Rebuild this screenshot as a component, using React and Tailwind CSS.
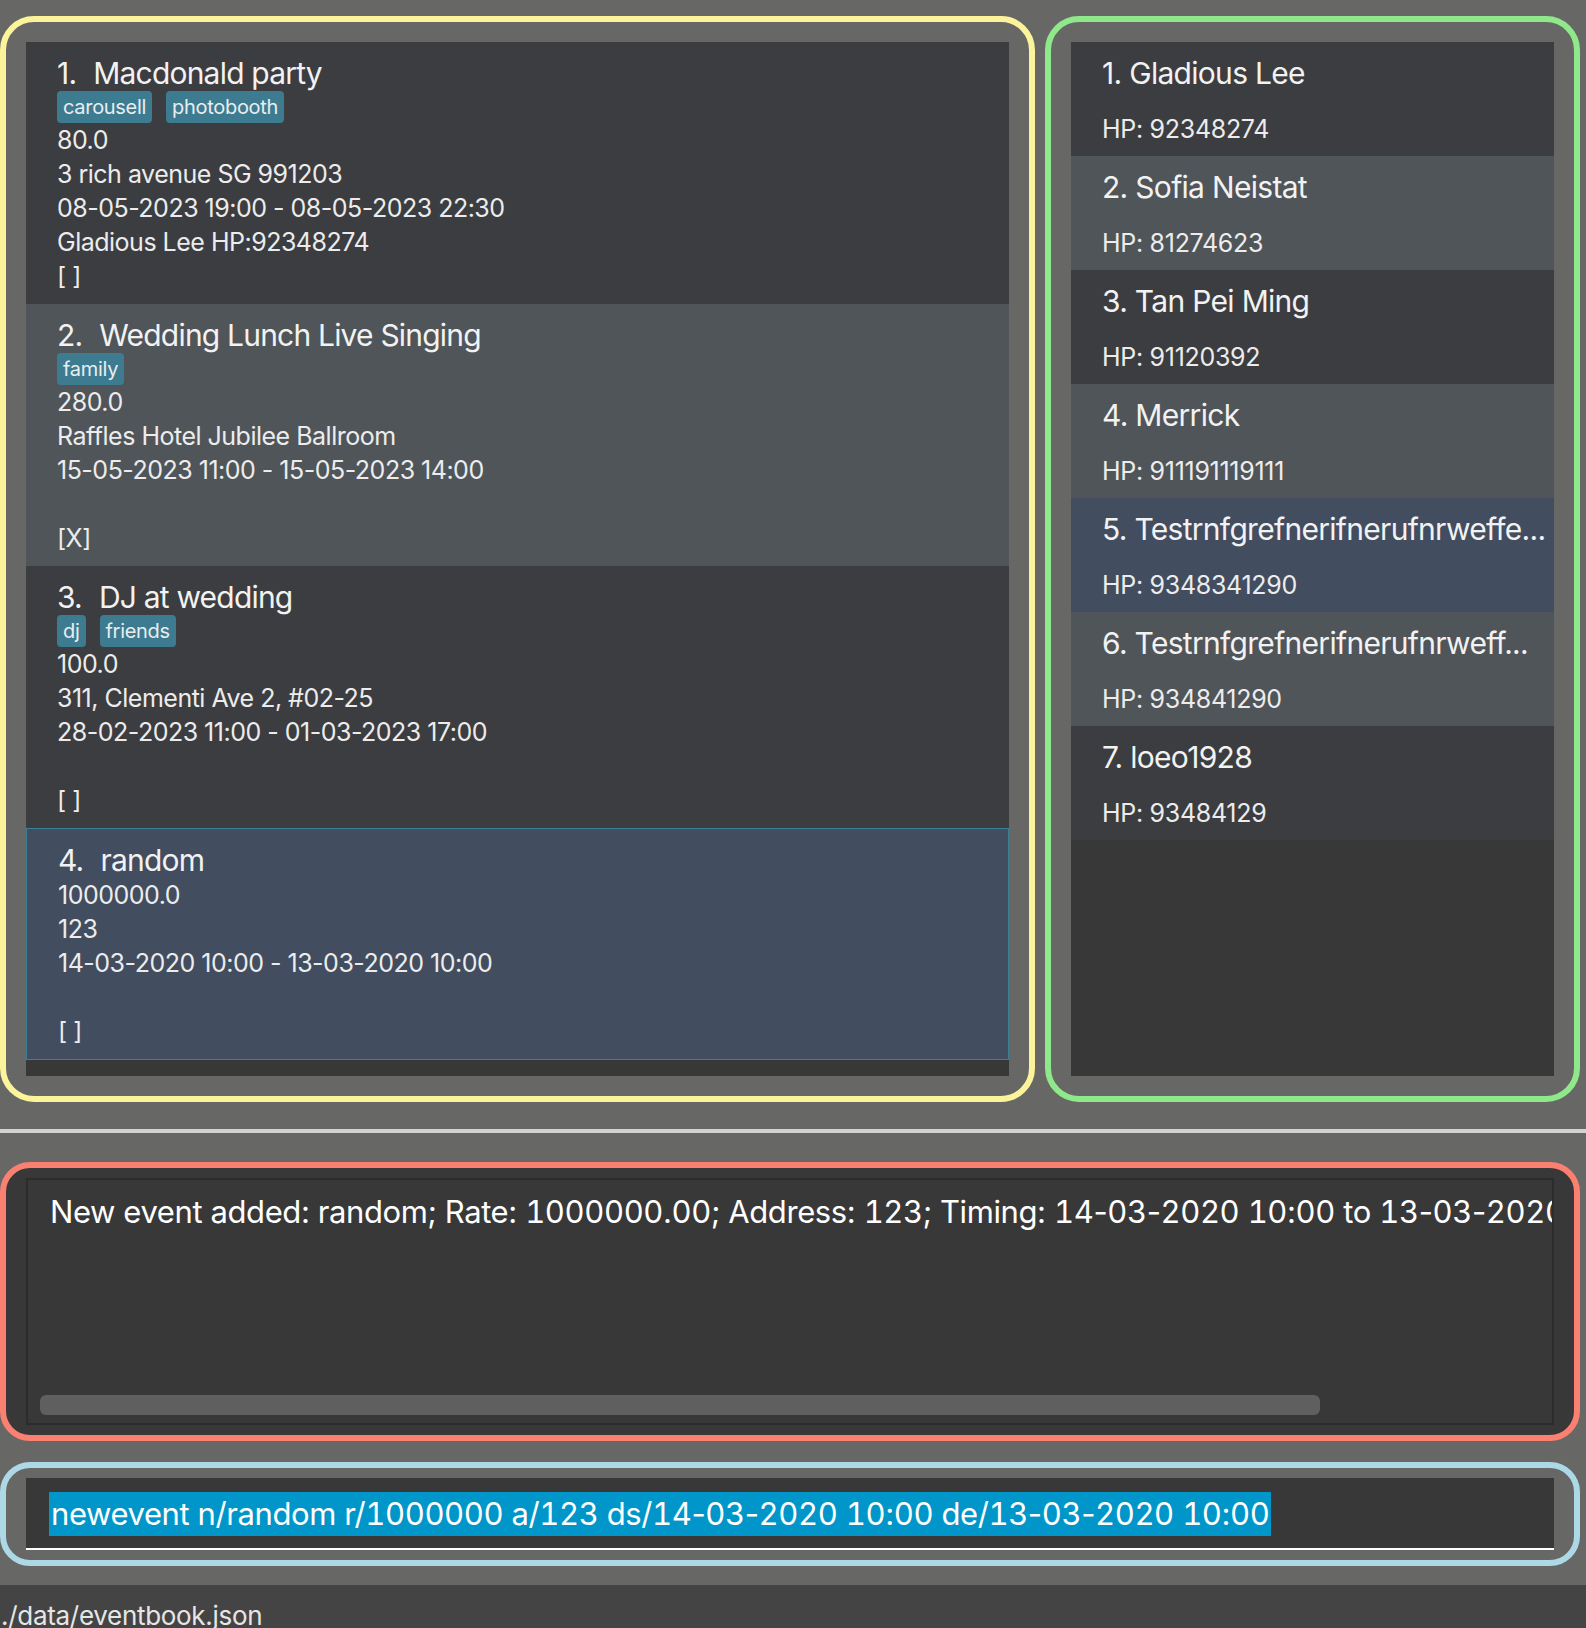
import React from 'react';

const events = [
  {
    title: 'Macdonald party',
    tags: ['carousell', 'photobooth'],
    lines: ['80.0', '3 rich avenue SG 991203', '08-05-2023 19:00 - 08-05-2023 22:30', 'Gladious Lee HP:92348274', '[ ]'],
    bg: 'bg-[#3c3d40]',
  },
  {
    title: 'Wedding Lunch Live Singing',
    tags: ['family'],
    lines: ['280.0', 'Raffles Hotel Jubilee Ballroom', '15-05-2023 11:00 - 15-05-2023 14:00', '', '[X]'],
    bg: 'bg-[#505559]',
  },
  {
    title: 'DJ at wedding',
    tags: ['dj', 'friends'],
    lines: ['100.0', '311, Clementi Ave 2, #02-25', '28-02-2023 11:00 - 01-03-2023 17:00', '', '[ ]'],
    bg: 'bg-[#3c3d40]',
  },
  {
    title: 'random',
    tags: [],
    lines: ['1000000.0', '123', '14-03-2020 10:00 - 13-03-2020 10:00', '', '[ ]'],
    bg: 'bg-[#424d5f] border border-[#3c7f95]',
  },
];

const persons = [
  { name: 'Gladious Lee', hp: '92348274', bg: 'bg-[#3c3d40]' },
  { name: 'Sofia Neistat', hp: '81274623', bg: 'bg-[#505559]' },
  { name: 'Tan Pei Ming', hp: '91120392', bg: 'bg-[#3c3d40]' },
  { name: 'Merrick', hp: '911191119111', bg: 'bg-[#505559]' },
  { name: 'Testrnfgrefnerifnerufnrweffe...', hp: '9348341290', bg: 'bg-[#424d5f]' },
  { name: 'Testrnfgrefnerifnerufnrweff...', hp: '934841290', bg: 'bg-[#505559]' },
  { name: 'loeo1928', hp: '93484129', bg: 'bg-[#3c3d40]' },
];

const resultText =
  'New event added: random; Rate: 1000000.00; Address: 123; Timing: 14-03-2020 10:00 to 13-03-2020 10:00';
const commandText = 'newevent n/random r/1000000 a/123 ds/14-03-2020 10:00 de/13-03-2020 10:00';

// wider digits, but keep hyphens narrow
const WideDigits = ({ text }) =>
  text.split(/(\d+)/).map((part, i) =>
    /^\d+$/.test(part) ? (
      <span key={i} className="tabular-nums">
        {part}
      </span>
    ) : (
      <React.Fragment key={i}>{part}</React.Fragment>
    )
  );

const EventCard = ({ event, index }) => (
  <div className={`${event.bg} pt-[13px] pb-[11px] pl-[31px] pr-[20px]`}>
    <div className="flex text-[30px] leading-[36px] tracking-[-0.8px] text-[#f2f2f2]">
      <span>{index + 1}.</span>
      <span className="ml-[17px]">{event.title}</span>
    </div>
    {event.tags.length > 0 && (
      <div className="flex gap-[14px]">
        {event.tags.map((tag) => (
          <span
            key={tag}
            className="h-[32px] px-[6px] rounded-[4px] bg-[#3d7b90] text-[20px] leading-[32px] tracking-[-0.3px] text-[#e8eef0]"
          >
            {tag}
          </span>
        ))}
      </div>
    )}
    {event.lines.map((line, i) => (
      <div key={i} className="h-[34px] text-[25px] leading-[34px] tracking-[-0.5px] text-[#ececec] whitespace-nowrap">
        {line}
      </div>
    ))}
  </div>
);

const PersonCard = ({ person, index }) => (
  <div className={`${person.bg} h-[114px] pt-[13px] pl-[31px] pr-[2px]`}>
    <div className="text-[30px] leading-[36px] tracking-[-0.7px] text-[#f2f2f2] whitespace-nowrap overflow-hidden">
      {index + 1}. {person.name}
    </div>
    <div className="mt-[21px] text-[25px] leading-[34px] tracking-[-0.3px] text-[#ececec]">HP: {person.hp}</div>
  </div>
);

export default function App() {
  return (
    <div
      className="w-[1586px] h-[1628px] bg-[#676765] flex flex-col overflow-hidden"
      style={{ fontFamily: 'Inter, "Noto Sans", sans-serif' }}
    >
      {/* Lists */}
      <div className="flex gap-[10px] pt-[16px]">
        <div className="w-[1035px] h-[1086px] border-[6px] border-[#fcf49b] rounded-[34px] p-[20px]">
          <div className="h-full bg-[#383838] overflow-hidden">
            {events.map((event, i) => (
              <EventCard key={i} event={event} index={i} />
            ))}
          </div>
        </div>
        <div className="w-[535px] h-[1086px] border-[6px] border-[#8fe98b] rounded-[34px] p-[20px]">
          <div className="h-full bg-[#383838] overflow-hidden">
            {persons.map((person, i) => (
              <PersonCard key={i} person={person} index={i} />
            ))}
          </div>
        </div>
      </div>

      <div className="mt-[27px] h-[4px] bg-[#d3d3d1]" />

      {/* Result display */}
      <div className="mt-[29px] w-[1580px] h-[279px] border-[6px] border-[#fa8072] rounded-[30px] bg-[#383838] pt-[10px] pb-[10px] pl-[20px] pr-[20px]">
        <div className="relative h-full border-2 border-[#2c2c2c] overflow-hidden">
          <div className="pt-[13px] pl-[22px] text-[31px] leading-[38px] tracking-[-0.4px] text-white whitespace-nowrap">
            <WideDigits text={resultText} />
          </div>
          <div className="absolute left-[12px] bottom-[8px] w-[1280px] h-[20px] rounded-[6px] bg-[#5f5f5f]" />
        </div>
      </div>

      {/* Command box */}
      <div className="mt-[21px] w-[1580px] h-[104px] border-[6px] border-[#add8e6] rounded-[30px] pt-[10px] pb-[10px] pl-[20px] pr-[20px]">
        <div className="h-[72px] bg-[#383838] border-b-2 border-white pt-[14px] pl-[23px]">
          <span className="inline-block h-[44px] px-[2px] bg-[#0096c9] text-[31px] leading-[44px] tracking-[-0.4px] text-white whitespace-nowrap">
            <WideDigits text={commandText} />
          </span>
        </div>
      </div>

      {/* Status bar */}
      <div className="mt-[19px] h-[43px] bg-[#444444] overflow-hidden pt-[15px] pl-[1px]">
        <div className="text-[26px] leading-[31px] tracking-[-0.3px] text-[#e6e6e6]">./data/eventbook.json</div>
      </div>
    </div>
  );
}
